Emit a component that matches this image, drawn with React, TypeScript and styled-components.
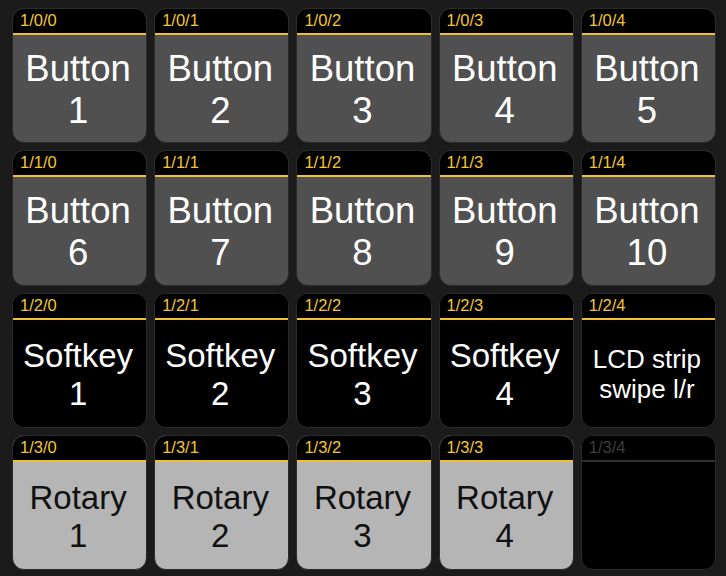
import React from "react";
import styled, { createGlobalStyle } from "styled-components";

const Global = createGlobalStyle`
  html, body { margin: 0; padding: 0; background: #1b1b1b; }
  body { font-family: "Liberation Sans", Arial, sans-serif; }
`;

type Kind = "button" | "softkey" | "lcd" | "rotary" | "empty";

const Grid = styled.div`
  box-sizing: border-box;
  width: 726px;
  height: 576px;
  padding: 8px 10px 6px 12px;
  display: grid;
  grid-template-columns: repeat(5, 1fr);
  grid-template-rows: repeat(4, 1fr);
  gap: 7px;
  background: #1b1b1b;
`;

const Cell = styled.div<{ $kind: Kind }>`
  display: flex;
  flex-direction: column;
  border-radius: 12px;
  overflow: hidden;
  border: 1px solid #2a2a2a;
  background: ${(p) =>
    p.$kind === "button" ? "#505050" : p.$kind === "rotary" ? "#b5b5b5" : "#000"};
  color: ${(p) => (p.$kind === "rotary" ? "#111" : "#fff")};
  min-width: 0;
  min-height: 0;
`;

const Header = styled.div<{ $dim?: boolean }>`
  flex: 0 0 auto;
  height: 24px;
  padding: 0 0 0 7px;
  background: #000;
  border-bottom: 2px solid ${(p) => (p.$dim ? "#2e2e2e" : "#f0c030")};
  color: ${(p) => (p.$dim ? "#3e3e3e" : "#f5c52e")};
  font-size: 16.5px;
  line-height: 22px;
  box-sizing: content-box;
`;

const Body = styled.div<{ $size: number }>`
  flex: 1 1 auto;
  display: flex;
  align-items: center;
  justify-content: center;
  padding: 3px 3px 0 0;
  text-align: center;
  font-size: ${(p) => p.$size}px;
  line-height: 1.149;
  white-space: pre-line;
`;

const sizes: Record<Kind, number> = {
  button: 36.5,
  softkey: 33,
  lcd: 26,
  rotary: 33,
  empty: 30,
};

const cells: { id: string; kind: Kind; text: string }[] = [
  ...[0, 1, 2, 3, 4].map((i) => ({ id: `1/0/${i}`, kind: "button" as Kind, text: `Button\n${i + 1}` })),
  ...[0, 1, 2, 3, 4].map((i) => ({ id: `1/1/${i}`, kind: "button" as Kind, text: `Button\n${i + 6}` })),
  ...[0, 1, 2, 3].map((i) => ({ id: `1/2/${i}`, kind: "softkey" as Kind, text: `Softkey\n${i + 1}` })),
  { id: "1/2/4", kind: "lcd", text: "LCD strip\nswipe l/r" },
  ...[0, 1, 2, 3].map((i) => ({ id: `1/3/${i}`, kind: "rotary" as Kind, text: `Rotary\n${i + 1}` })),
  { id: "1/3/4", kind: "empty", text: "" },
];

export default function App() {
  return (
    <>
      <Global />
      <Grid>
        {cells.map((c) => (
          <Cell key={c.id} $kind={c.kind}>
            <Header $dim={c.kind === "empty"}>{c.id}</Header>
            <Body $size={sizes[c.kind]}>{c.text}</Body>
          </Cell>
        ))}
      </Grid>
    </>
  );
}
